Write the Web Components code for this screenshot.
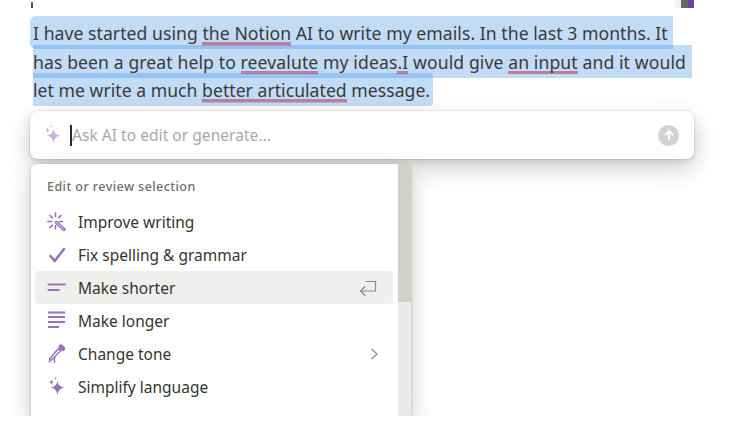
<!DOCTYPE html>
<html><head><meta charset="utf-8">
<style>
html,body{margin:0;padding:0;background:#fff;width:732px;height:437px;overflow:hidden}
body{font-family:"Noto Sans","Open Sans",sans-serif;color:#37352f}
</style></head><body>
<x-app>
  <x-topmarks></x-topmarks>
  <x-selection>
    <x-line style="--ml:0px;--pl:3px;--w:643px;--ls:.05px;--r:6px 0 0 6px">I have started using <x-mark>the Notion</x-mark> AI to write my emails. In the last 3 months. It</x-line>
    <x-line style="--ml:3px;--pl:0px;--w:659px;--ls:.1px">has been a great help to <x-mark>reevalute</x-mark> my ideas<x-mark>.I</x-mark> would give <x-mark>an input</x-mark> and it would</x-line>
    <x-line style="--ml:3px;--pl:0px;--w:400px;--ls:.03px;--r:0 4px 4px 0">let me write a much <x-mark>better articulated</x-mark> message.</x-line>
  </x-selection>
  <x-askbar>Ask AI to edit or generate...</x-askbar>
  <x-menu>
    <x-menu-heading>Edit or review selection</x-menu-heading>
    <x-menu-item icon="improve">Improve writing</x-menu-item>
    <x-menu-item icon="check">Fix spelling &amp; grammar</x-menu-item>
    <x-menu-item icon="short" active>Make shorter</x-menu-item>
    <x-menu-item icon="long">Make longer</x-menu-item>
    <x-menu-item icon="mic" arrow>Change tone</x-menu-item>
    <x-menu-item icon="spark">Simplify language</x-menu-item>
  </x-menu>
</x-app>
<script>
function def(name, css, html){
  customElements.define(name, class extends HTMLElement{
    constructor(){super();this.attachShadow({mode:"open"}).innerHTML=`<style>${css}</style>${typeof html==="function"?html(this):html}`;}
  });
}
const SPARK=c=>`<svg viewBox="0 0 20 20" width="20" height="20" fill="${c}"><path d="M10.500 3.500c.7 4.300 2.300 6.200 7 7.200-4.700.8-6.300 2.700-7 7.500-.7-4.800-2.300-6.700-7-7.500 4.700-1 6.300-2.900 7-7.200z"/><path d="M4.500 2.500c.3 1.700.9 2.400 2.500 2.700-1.600.3-2.200 1-2.500 2.700C4.200 6.200 3.600 5.500 2 5.200 3.600 4.900 4.200 4.200 4.500 2.500z"/><path d="M8.500 0c.15.9.5 1.250 1.300 1.400-.8.15-1.150.5-1.300 1.400-.15-.9-.5-1.250-1.300-1.400.8-.15 1.150-.5 1.300-1.400z"/></svg>`;
const P="#9672ba";
const ICONS={
 improve:`<svg viewBox="0 0 20 20" width="20" height="20" fill="none" stroke="${P}" stroke-width="1.700" stroke-linecap="round"><path d="M8.500 1v3.200M8.500 13.500v3.200M1 9.500h3.500M12.500 9.500h3M3 3.500l2.200 2.200M14 3.500l-2.200 2.200M3 15.500l2.200-2.200"/><path d="M9.500 10.500l7.500 7" stroke-width="3.400"/><path d="M9.500 10.500l7.500 7" stroke="#e4daee" stroke-width="1"/></svg>`,
 check:`<svg viewBox="0 0 20 20" width="20" height="20" fill="none" stroke="${P}" stroke-width="2.500" stroke-linecap="round" stroke-linejoin="round"><path d="M3.500 11l4.200 5L17 4"/></svg>`,
 short:`<svg viewBox="0 0 20 20" width="20" height="20" fill="none" stroke="${P}" stroke-width="1.800" stroke-linecap="round"><path d="M1.500 6.500h16.500M1.500 12h10.500"/></svg>`,
 long:`<svg viewBox="0 0 20 20" width="20" height="20" fill="none" stroke="${P}" stroke-width="1.800" stroke-linecap="butt"><path d="M1 1.500h17M1 6h17M1 11h17M1 16h11"/></svg>`,
 mic:`<svg viewBox="0 0 20 20" width="20" height="20" fill="none" stroke="${P}" stroke-width="1.400" stroke-linecap="round" stroke-linejoin="round"><path d="M11.500 4.500L2.500 15l1.500 1.500L13.500 7z"/><path d="M7.500 13v5.500M2 17.800l1-1"/><path d="M14 2.800l1.800 1.800" stroke-width="4.800"/></svg>`,
 spark:SPARK(P)
};
def("x-app",":host{display:block;width:732px;height:416px;overflow:hidden;box-sizing:border-box;padding:0 38px 0 30px}","<slot></slot>");
def("x-topmarks",":host{display:flex;justify-content:space-between;height:16px;align-items:flex-start}.a{width:2px;height:6px;background:#555;margin:2px 0 0 1px}.b{display:flex;height:8px;width:19px}.b i{flex:none;width:6px;background:#f3f3f3}.b i+i{width:7px;background:#666}.b i+i+i{width:6px;background:#6e3fa3}",`<div class="a"></div><div class="b"><i></i><i></i><i></i></div>`);
def("x-selection",":host{display:block;height:89px}","<slot></slot>");
def("x-line",`:host{display:block;box-sizing:border-box;height:33px;margin-top:-4.500px;margin-left:var(--ml);padding-left:var(--pl);width:var(--w);background:rgba(35,131,226,.28);border-radius:var(--r,0);font-size:17.600px;letter-spacing:var(--ls,0);line-height:35px;white-space:nowrap;color:#3a3a38}:host(:first-child){margin-top:0}`,"<slot></slot>");
def("x-mark",":host{display:inline;padding-bottom:.5px;background:linear-gradient(rgba(175,55,85,.55),rgba(175,55,85,.55)) 0 100%/100% 3.500px no-repeat}","<slot></slot>");
def("x-askbar",`:host{display:flex;align-items:center;height:48px;margin-top:6px;background:#fff;border-radius:8px;box-shadow:0 0 0 1px rgba(15,15,15,.05),0 3px 6px rgba(15,15,15,.1),0 9px 24px rgba(15,15,15,.2);padding:0 15px 0 13px;box-sizing:border-box;font-size:15.600px;color:#a9a9a7}
.ic{display:flex;width:27px}.caret{width:2px;height:21px;background:#2b2b2b}.t{flex:1}
.send{width:21px;height:21px;border-radius:50%;background:#d3d3d3;display:flex;align-items:center;justify-content:center}`,
`<span class="ic">${SPARK("#c9b2dd")}</span><span class="caret"></span><span class="t"><slot></slot></span><span class="send"><svg viewBox="0 0 12 12" width="12" height="12" fill="none" stroke="#fff" stroke-width="2" stroke-linecap="round" stroke-linejoin="round"><path d="M6 10.500V2M2.500 5.500L6 2l3.500 3.500"/></svg></span>`);
def("x-menu",`:host{display:flex;width:380px;height:253px;margin:5px 0 0 1px;background:#fff;border-radius:6px 6px 0 0;box-shadow:0 0 0 1px rgba(15,15,15,.05),0 3px 6px rgba(15,15,15,.1),0 9px 24px rgba(15,15,15,.2);overflow:hidden}
.list{flex:1;min-width:0;padding:4px 5px 0 4px;box-sizing:border-box}
.bar{width:13px;background:#ebeae6;display:flex;flex-direction:column}.thumb{height:138px;background:#d1d0cb;border-top-right-radius:4px}`,
`<div class="list"><slot></slot></div><div class="bar"><div class="thumb"></div></div>`);
def("x-menu-heading",":host{display:flex;align-items:center;height:37px;padding-left:12px;font-size:12.600px;letter-spacing:.4px;font-weight:500;color:#6f6e69}","<slot></slot>");
def("x-menu-item",`:host{display:flex;align-items:center;height:33px;border-radius:4px;font-size:15.500px;color:#37352f;padding:0 13px 0 12px;box-sizing:border-box}
:host([active]){background:#efefee}
.ic{display:flex;width:31px;flex:none}.t{flex:1}.r{display:flex}`,
el=>{const i=el.getAttribute("icon");
 let r="";
 if(el.hasAttribute("active")) r=`<svg viewBox="0 0 18 18" width="18" height="18" style="margin-right:3px" fill="none" stroke="#8a8a88" stroke-width="1.200" stroke-linejoin="round" stroke-linecap="round"><path d="M7 2.500h9.500v9.500H1.500M6 7.500L1.500 12 6 16.500"/></svg>`;
 if(el.hasAttribute("arrow")) r=`<svg viewBox="0 0 12 14" width="12" height="14" fill="none" stroke="#8f8f8d" stroke-width="1.300"><path d="M3.500 2L9 7l-5.500 5"/></svg>`;
 return `<span class="ic">${ICONS[i]}</span><span class="t"><slot></slot></span><span class="r">${r}</span>`;});
</script>
</body></html>
